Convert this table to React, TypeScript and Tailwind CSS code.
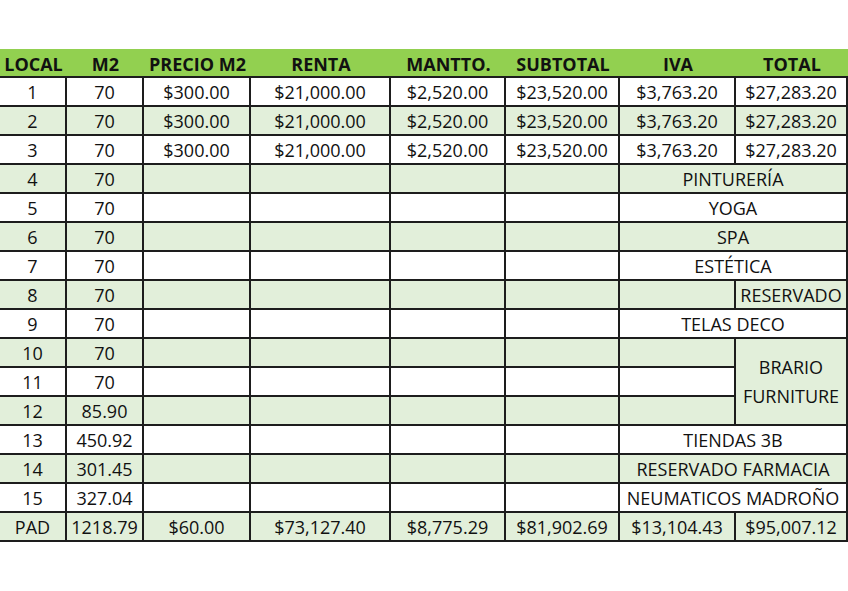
import { Fragment } from 'react';

const headers = ['LOCAL', 'M2', 'PRECIO M2', 'RENTA', 'MANTTO.', 'SUBTOTAL', 'IVA', 'TOTAL'];

const priced = ['$300.00', '$21,000.00', '$2,520.00', '$23,520.00', '$3,763.20', '$27,283.20'];

const cell = 'flex items-center justify-center border-b-2 border-r-2 border-[#1d1d1d] whitespace-nowrap overflow-hidden';

function Cell({ children, green, className = '' }: { children?: React.ReactNode; green?: boolean; className?: string }) {
  return <div className={`${cell} ${green ? 'bg-[#e2efda]' : 'bg-white'} ${className}`}>{children}</div>;
}

// filas 4..15 : local, m2, rótulo, variante
const rest: { local: string; m2: string; label?: string; kind: 'span' | 'reservado' | 'brario' | 'ivaOnly' }[] = [
  { local: '4', m2: '70', label: 'PINTURERÍA', kind: 'span' },
  { local: '5', m2: '70', label: 'YOGA', kind: 'span' },
  { local: '6', m2: '70', label: 'SPA', kind: 'span' },
  { local: '7', m2: '70', label: 'ESTÉTICA', kind: 'span' },
  { local: '8', m2: '70', label: 'RESERVADO', kind: 'reservado' },
  { local: '9', m2: '70', label: 'TELAS DECO', kind: 'span' },
  { local: '10', m2: '70', kind: 'brario' },
  { local: '11', m2: '70', kind: 'ivaOnly' },
  { local: '12', m2: '85.90', kind: 'ivaOnly' },
  { local: '13', m2: '450.92', label: 'TIENDAS 3B', kind: 'span' },
  { local: '14', m2: '301.45', label: 'RESERVADO FARMACIA', kind: 'span' },
  { local: '15', m2: '327.04', label: 'NEUMATICOS MADROÑO', kind: 'span' },
];

export default function App() {
  return (
    <div className="w-[848px] h-[591px] bg-white pt-[49px] text-[#111] text-[18px] leading-none" style={{ fontFamily: '"Open Sans", "Noto Sans", sans-serif' }}>
      <div className="grid grid-cols-[67px_77px_107px_140px_115px_114px_116px_112px] auto-rows-[29px]">
        {headers.map((h) => (
          <div key={h} className="flex items-center justify-center bg-[#92d050] border-b-2 border-[#1d1d1d] font-bold text-[18px] pt-[2px]">
            {h}
          </div>
        ))}

        {[1, 2, 3].map((n) => {
          const green = n === 2;
          return (
            <Fragment key={n}>
              <Cell green={green}>{n}</Cell>
              <Cell green={green}>70</Cell>
              {priced.map((p, i) => (
                <Cell key={i} green={green}>{p}</Cell>
              ))}
            </Fragment>
          );
        })}

        {rest.map((r, idx) => {
          const green = idx % 2 === 0;
          return (
            <Fragment key={r.local}>
              <Cell green={green}>{r.local}</Cell>
              <Cell green={green}>{r.m2}</Cell>
              <Cell green={green} />
              <Cell green={green} />
              <Cell green={green} />
              <Cell green={green} />
              {r.kind === 'span' && (
                <Cell green={green} className="col-span-2">{r.label}</Cell>
              )}
              {r.kind === 'reservado' && (
                <>
                  <Cell green={green} />
                  <Cell green={green}>{r.label}</Cell>
                </>
              )}
              {r.kind === 'brario' && (
                <>
                  <Cell green={green} />
                  <Cell green className="row-span-3 flex-col gap-[11px]">
                    <span>BRARIO</span>
                    <span>FURNITURE</span>
                  </Cell>
                </>
              )}
              {r.kind === 'ivaOnly' && <Cell green={green} />}
            </Fragment>
          );
        })}

        {['PAD', '1218.79', '$60.00', '$73,127.40', '$8,775.29', '$81,902.69', '$13,104.43', '$95,007.12'].map((v) => (
          <Cell key={v} green>{v}</Cell>
        ))}
      </div>
    </div>
  );
}
